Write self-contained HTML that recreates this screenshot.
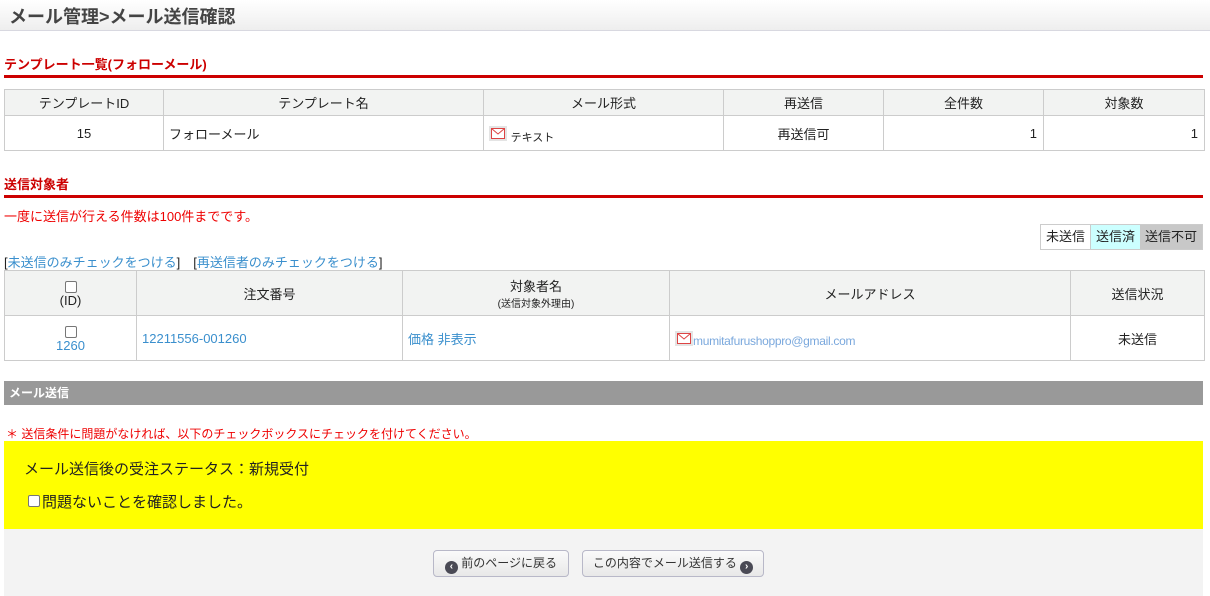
<!DOCTYPE html>
<html><head><meta charset="utf-8"><style>
*{margin:0;padding:0;box-sizing:border-box}
body{width:1210px;height:596px;overflow:hidden;background:#fff;font-family:"Liberation Sans","Noto Sans CJK JP",sans-serif;font-size:13px;color:#222;position:relative}
.abs{position:absolute}
.hdr{left:0;top:0;width:1210px;height:31px;background:linear-gradient(#fff,#eee);border-bottom:1px solid #d8d8e0}
.hdr span{position:absolute;left:9px;top:3px;font-size:18px;font-weight:bold;color:#444}
.st{font-size:13px;font-weight:bold;color:#c00;left:4px}
.rl{left:4px;width:1199px;height:3px;background:#c00}
table{border-collapse:collapse;position:absolute;left:4px;table-layout:fixed}
td,th{border:1px solid #ccc;font-weight:normal;text-align:center;font-size:13px}
th{background:#f2f3f2}
a{color:#3a8fcd;text-decoration:none}
.env{display:inline-block;width:18px;height:15px;background:#e4e4e4;vertical-align:middle;position:relative}
.env svg{position:absolute;left:2px;top:2px}
.cb{display:inline-block;width:12px;height:12px;border:1px solid #777;border-radius:2px;background:#fff;vertical-align:middle}
.btn{position:absolute;top:550px;height:27px;border:1px solid #b8b8c8;border-radius:4px;background:linear-gradient(#fafafa,#e8e8e8);font-size:12px;color:#333;line-height:25px;white-space:nowrap;text-align:center}
.ci{display:inline-block;width:13px;height:13px;border-radius:50%;background:#4a4a55;color:#fff;font-size:10px;line-height:12px;text-align:center;vertical-align:-2px;font-weight:bold}
</style></head><body>
<div class="abs hdr"><span>メール管理&gt;メール送信確認</span></div>
<div class="abs st" style="top:54px">テンプレート一覧(フォローメール)</div>
<div class="abs rl" style="top:75px"></div>
<table style="top:89px;width:1200px">
<colgroup><col style="width:159px"><col style="width:320px"><col style="width:240px"><col style="width:160px"><col style="width:160px"><col style="width:161px"></colgroup>
<tr style="height:26px"><th>テンプレートID</th><th>テンプレート名</th><th>メール形式</th><th>再送信</th><th>全件数</th><th>対象数</th></tr>
<tr style="height:35px"><td>15</td><td style="text-align:left;padding-left:5px">フォローメール</td><td style="text-align:left;padding-left:5px"><span class="env"><svg width="14" height="11"><rect x=".5" y=".5" width="13" height="10" fill="#fff" stroke="#d44"/><path d="M.5 .5L7 6L13.5 .5" fill="none" stroke="#d44"/></svg></span> <span style="font-size:11px;position:relative;top:4px">テキスト</span></td><td>再送信可</td><td style="text-align:right;padding-right:6px">1</td><td style="text-align:right;padding-right:6px">1</td></tr>
</table>
<div class="abs st" style="top:174px">送信対象者</div>
<div class="abs rl" style="top:195px"></div>
<div class="abs" style="left:4px;top:206px;color:#e00;font-size:13px">一度に送信が行える件数は100件までです。</div>
<div class="abs" style="left:1040px;top:224px;height:26px;display:flex;border:1px solid #ccc;font-size:13px;line-height:24px">
<span style="padding:0 5px;background:#fff">未送信</span><span style="padding:0 5px;background:#ccffff;border-left:1px solid #ccc">送信済</span><span style="padding:0 5px;background:#c8c8c8">送信不可</span></div>
<div class="abs" style="left:4px;top:252px;font-size:13px">[<a>未送信のみチェックをつける</a>]　[<a>再送信者のみチェックをつける</a>]</div>
<table style="top:270px;width:1200px">
<colgroup><col style="width:132px"><col style="width:266px"><col style="width:267px"><col style="width:401px"><col style="width:134px"></colgroup>
<tr style="height:45px"><th><span class="cb"></span><br>(ID)</th><th>注文番号</th><th>対象者名<br><span style="font-size:10px">(送信対象外理由)</span></th><th>メールアドレス</th><th>送信状況</th></tr>
<tr style="height:45px"><td><span class="cb"></span><br><a>1260</a></td><td style="text-align:left;padding-left:5px"><a>12211556-001260</a></td><td style="text-align:left;padding-left:5px"><a>価格 非表示</a></td><td style="text-align:left;padding-left:5px"><span class="env"><svg width="14" height="11"><rect x=".5" y=".5" width="13" height="10" fill="#fff" stroke="#d44"/><path d="M.5 .5L7 6L13.5 .5" fill="none" stroke="#d44"/></svg></span><span style="font-size:12px;color:#7aa8dd;letter-spacing:-.3px;position:relative;top:3px">mumitafurushoppro@gmail.com</span></td><td>未送信</td></tr>
</table>
<div class="abs" style="left:4px;top:381px;width:1199px;height:24px;background:#999;color:#fff;font-weight:bold;font-size:12px;line-height:24px;padding-left:5px">メール送信</div>
<div class="abs" style="left:6px;top:425px;color:#e00;font-size:12px">＊ 送信条件に問題がなければ、以下のチェックボックスにチェックを付けてください。</div>
<div class="abs" style="left:4px;top:441px;width:1199px;height:88px;background:#ff0">
<div class="abs" style="left:20px;top:17px;font-size:15px">メール送信後の受注ステータス：新規受付</div>
<div class="abs" style="left:24px;top:50px;font-size:15px;white-space:nowrap"><span class="cb" style="width:12px;height:12px;vertical-align:0px;margin-right:2px"></span>問題ないことを確認しました。</div>
</div>
<div class="abs" style="left:4px;top:529px;width:1199px;height:67px;background:#f3f3f3"></div>
<div class="btn" style="left:433px;width:136px"><span class="ci">‹</span> 前のページに戻る</div>
<div class="btn" style="left:582px;width:182px">この内容でメール送信する <span class="ci">›</span></div>
</body></html>
